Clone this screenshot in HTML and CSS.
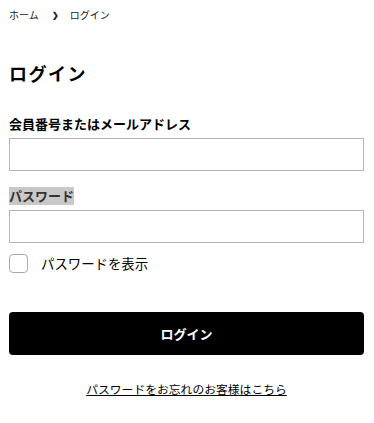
FILE: index.html
```html
<!DOCTYPE html>
<html lang="ja">
<head>
    <meta charset="UTF-8">
    <meta name="viewport" content="width=device-width, initial-scale=1.0">
    <title>ログイン</title>
    <link rel="stylesheet" href="styles.css">
</head>
<body>
    <nav class="breadcrumb">
        <a href="#">ホーム</a>
        <span class="sep">&#x276F;</span>
        <span>ログイン</span>
    </nav>
    <main class="login">
        <h1>ログイン</h1>
        <form class="login-form">
            <div class="field">
                <label for="member-id">会員番号またはメールアドレス</label>
                <input id="member-id" type="text">
            </div>
            <div class="field">
                <label for="password"><span class="selected">パスワード</span></label>
                <input id="password" type="password">
            </div>
            <label class="show-password">
                <span class="check"></span>
                パスワードを表示
            </label>
            <button type="button" class="login-button">ログイン</button>
            <p class="forgot"><a href="#">パスワードをお忘れのお客様はこちら</a></p>
        </form>
    </main>
</body>
</html>
```

FILE: styles.css
```css
body {
    font-family: "Noto Sans CJK JP", "Noto Sans", sans-serif;
    margin: 0;
    padding: 0 10px 0 9px;
    background-color: #fff;
    color: #000;
}
.breadcrumb {
    display: flex;
    align-items: center;
    height: 28px;
    font-size: 10px;
    color: #222;
}
.breadcrumb a {
    color: #222;
    text-decoration: none;
}
.breadcrumb .sep {
    margin: 0 11px 0 13px;
    font-size: 8px;
    font-weight: bold;
}
.login h1 {
    margin: 32px 0 0;
    font-size: 18px;
    font-weight: bold;
    letter-spacing: 1.5px;
    line-height: 26px;
}
.login-form {
    margin-top: 28px;
}
.field {
    margin-bottom: 15px;
}
.field label {
    display: block;
    font-size: 13px;
    font-weight: bold;
    line-height: 20px;
    margin-bottom: 4px;
}
.field label .selected {
    display: inline-block;
    background-color: #c8c8c8;
    color: #333;
    line-height: 18px;
}
.field input {
    display: block;
    box-sizing: border-box;
    width: 100%;
    height: 33px;
    border: 1px solid #b5b5b5;
    border-radius: 0;
    padding: 0 8px;
    font-size: 14px;
}
.show-password {
    display: flex;
    align-items: center;
    font-size: 13.4px;
    margin-top: -5px;
}
.check {
    box-sizing: border-box;
    width: 19px;
    height: 19px;
    border: 1px solid #aaa;
    border-radius: 4px;
    margin-right: 13px;
}
.login-button {
    display: block;
    width: 100%;
    height: 43px;
    margin-top: 39px;
    border: none;
    border-radius: 4px;
    background-color: #000;
    color: #fff;
    font-family: inherit;
    font-size: 13px;
    font-weight: bold;
    cursor: pointer;
}
.forgot {
    margin: 25px 0 0;
    text-align: center;
    font-size: 11.8px;
}
.forgot a {
    color: #000;
}
```
